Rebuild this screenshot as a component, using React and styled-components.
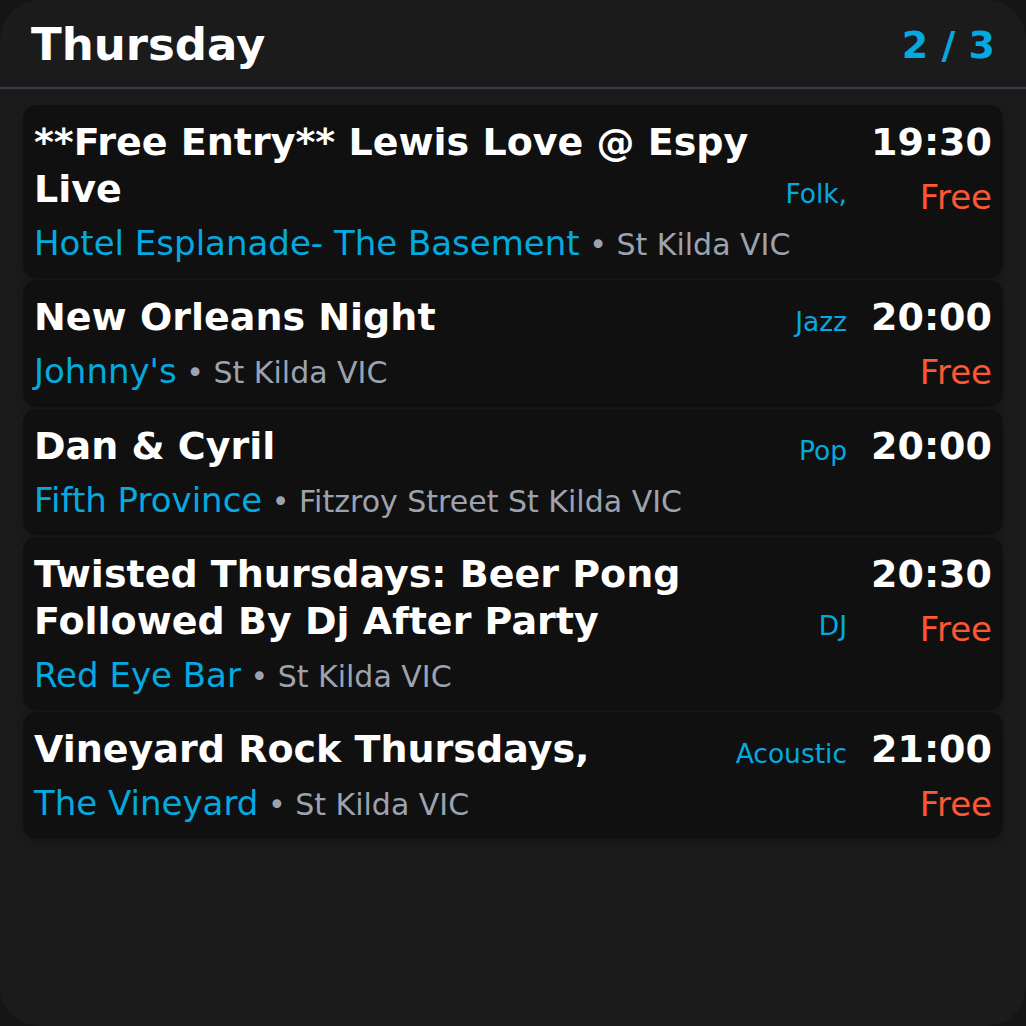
import React from 'react';
import styled, { createGlobalStyle } from 'styled-components';

const events = [
  {
    id: 1,
    title: '**Free Entry** Lewis Love @ Espy Live',
    genre: 'Folk,',
    time: '19:30',
    venue: 'Hotel Esplanade- The Basement',
    location: 'St Kilda VIC',
    price: 'Free',
  },
  {
    id: 2,
    title: 'New Orleans Night',
    genre: 'Jazz',
    time: '20:00',
    venue: "Johnny's",
    location: 'St Kilda VIC',
    price: 'Free',
  },
  {
    id: 3,
    title: 'Dan & Cyril',
    genre: 'Pop',
    time: '20:00',
    venue: 'Fifth Province',
    location: 'Fitzroy Street St Kilda VIC',
  },
  {
    id: 4,
    title: 'Twisted Thursdays: Beer Pong Followed By Dj After Party',
    genre: 'DJ',
    time: '20:30',
    venue: 'Red Eye Bar',
    location: 'St Kilda VIC',
    price: 'Free',
  },
  {
    id: 5,
    title: 'Vineyard Rock Thursdays,',
    genre: 'Acoustic',
    time: '21:00',
    venue: 'The Vineyard',
    location: 'St Kilda VIC',
    price: 'Free',
  },
];

const GlobalStyle = createGlobalStyle`
  html, body {
    margin: 0;
    padding: 0;
    background: #151515;
  }
  body {
    font-family: "DejaVu Sans", "Noto Sans", sans-serif;
  }
`;

const App = () => {
  return (
    <>
      <GlobalStyle />
      <Panel>
        <Header>
          <DayTitle>Thursday</DayTitle>
          <PageCount>2 / 3</PageCount>
        </Header>

        <EventList>
          {events.map((ev) => (
            <EventCard key={ev.id}>
              <Main>
                <TitleRow>
                  <EventTitle>{ev.title}</EventTitle>
                  <Genre>{ev.genre}</Genre>
                </TitleRow>
                <VenueLine>
                  <Venue>{ev.venue}</Venue>
                  <Location> • {ev.location}</Location>
                </VenueLine>
              </Main>
              <Side>
                <Time>{ev.time}</Time>
                {ev.price && <Price>{ev.price}</Price>}
              </Side>
            </EventCard>
          ))}
        </EventList>
      </Panel>
    </>
  );
};

const Panel = styled.div`
  width: 1026px;
  height: 1026px;
  box-sizing: border-box;
  background: #1b1b1b;
  border-radius: 40px;
  overflow: hidden;
  display: flex;
  flex-direction: column;
`;

const Header = styled.div`
  height: 89px;
  display: flex;
  justify-content: space-between;
  align-items: center;
  padding: 2px 31px 0 31px;
  box-sizing: border-box;
  border-bottom: 2px solid #373c48;
`;

const DayTitle = styled.h1`
  margin: 0;
  font-size: 45px;
  font-weight: bold;
  color: #ffffff;
  line-height: 1.2;
`;

const PageCount = styled.span`
  font-size: 38px;
  font-weight: bold;
  color: #03a9df;
`;

const EventList = styled.div`
  display: flex;
  flex-direction: column;
  gap: 2px;
  padding: 16px 23px 0;
`;

const EventCard = styled.div`
  display: flex;
  gap: 24px;
  padding: 14px 11px 15px 11px;
  background: #101010;
  border-radius: 14px;
  box-shadow: 0 4px 10px rgba(0, 0, 0, 0.2);
`;

const Main = styled.div`
  flex: 1;
  min-width: 0;
  display: flex;
  flex-direction: column;
  gap: 10px;
`;

const TitleRow = styled.div`
  display: flex;
  align-items: flex-end;
  gap: 24px;
`;

const EventTitle = styled.div`
  flex: 1;
  font-size: 38px;
  font-weight: bold;
  line-height: 47px;
  color: #ffffff;
`;

const Genre = styled.span`
  font-size: 26.5px;
  line-height: 32px;
  margin-bottom: 3px;
  color: #03a9df;
  white-space: nowrap;
`;

const VenueLine = styled.div`
  font-size: 34px;
  line-height: 40px;
  height: 40px;
  white-space: nowrap;
`;

const Venue = styled.span`
  color: #03a9df;
`;

const Location = styled.span`
  font-size: 30px;
  line-height: 1;
  color: #9ca3af;
`;

const Side = styled.div`
  display: flex;
  flex-direction: column;
  align-items: flex-end;
  gap: 11px;
`;

const Time = styled.span`
  font-size: 38px;
  font-weight: bold;
  line-height: 47px;
  color: #ffffff;
`;

const Price = styled.span`
  font-size: 34px;
  line-height: 40px;
  color: #ff5733;
`;

export default App;
